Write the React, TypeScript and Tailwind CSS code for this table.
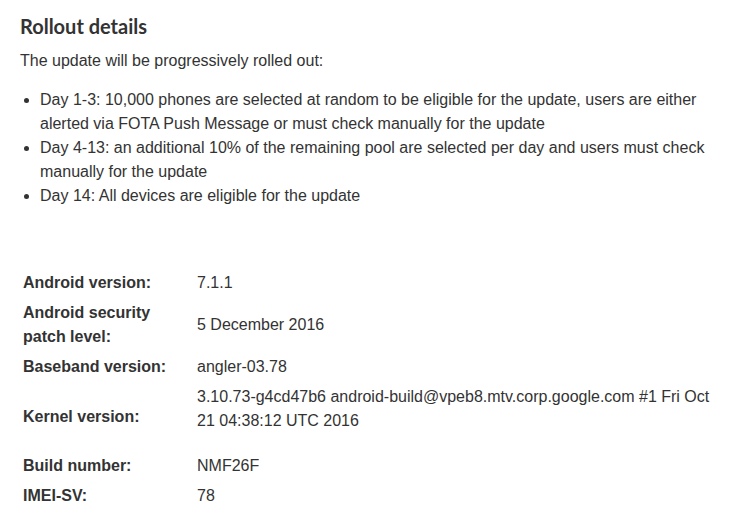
const rows: { label: string; value: string; extra?: boolean }[] = [
  { label: "Android version:", value: "7.1.1" },
  { label: "Android security patch level:", value: "5 December 2016" },
  { label: "Baseband version:", value: "angler-03.78" },
  {
    label: "Kernel version:",
    value:
      "3.10.73-g4cd47b6 android-build@vpeb8.mtv.corp.google.com #1 Fri Oct 21 04:38:12 UTC 2016",
    extra: true,
  },
  { label: "Build number:", value: "NMF26F" },
  { label: "IMEI-SV:", value: "78" },
];

export default function App() {
  return (
    <div className="min-h-screen bg-white text-[#333] font-['Liberation_Sans',Arial,sans-serif]">
      <div className="w-[698px] ml-5 pt-[14px]">
        <h2 className="text-[20px] leading-6 font-bold font-['Lato','Open_Sans',sans-serif]">
          Rollout details
        </h2>
        <p className="mt-[11px] text-base leading-6">
          The update will be progressively rolled out:
        </p>
        <ul className="mt-[15px] list-disc pl-5 text-base leading-6">
          <li>
            Day 1-3: 10,000 phones are selected at random to be eligible for the
            update, users are either alerted via FOTA Push Message or must check
            manually for the update
          </li>
          <li>
            Day 4-13: an additional 10% of the remaining pool are selected per
            day and users must check manually for the update
          </li>
          <li>Day 14: All devices are eligible for the update</li>
        </ul>

        <table className="mt-[60px] w-full border-collapse text-base leading-6">
          <tbody>
            {rows.map((row) => (
              <tr key={row.label}>
                <td className="w-[174px] p-[3px] align-middle font-bold">
                  {row.label}
                </td>
                <td
                  className={
                    row.extra
                      ? "p-[3px] pb-[18px] align-middle"
                      : "p-[3px] align-middle"
                  }
                >
                  {row.value}
                </td>
              </tr>
            ))}
          </tbody>
        </table>
      </div>
    </div>
  );
}
